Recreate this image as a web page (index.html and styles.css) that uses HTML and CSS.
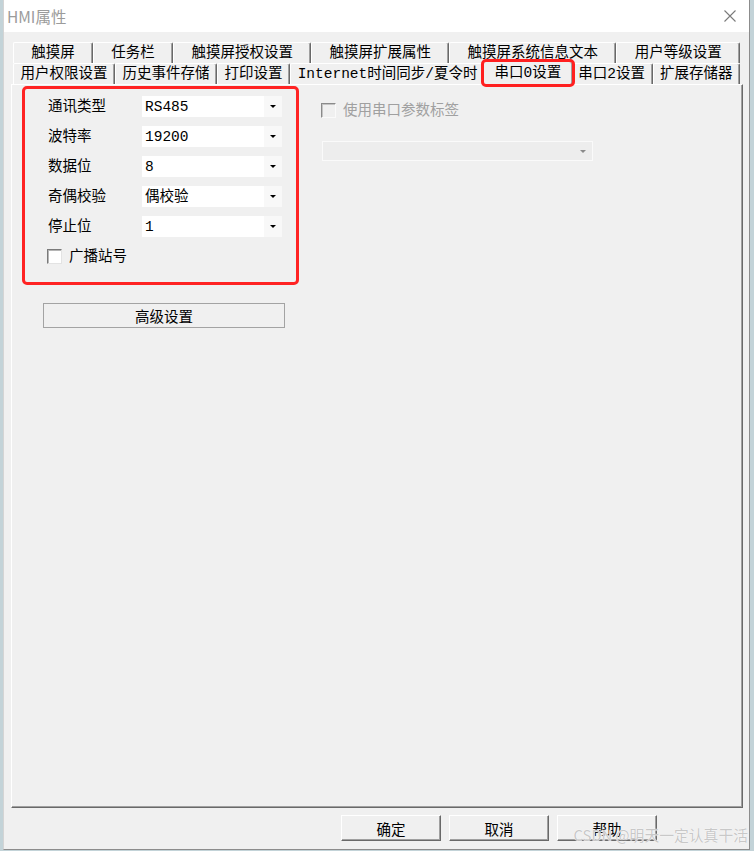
FILE: index.html
```html
<!doctype html>
<html lang="zh-CN">
  <head>
    <meta charset="UTF-8" />
    <meta name="viewport" content="width=device-width, initial-scale=1.0" />
    <title>HMI属性</title>
    <link rel="stylesheet" href="styles.css">
  </head>
  <body>
    <div class="window">
      <header class="titlebar">
        <span class="title">HMI属性</span>
        <svg class="close-icon" width="14" height="14" viewBox="0 0 14 14" aria-label="关闭">
          <path d="M1.5 1.5 L12.5 12.5 M12.5 1.5 L1.5 12.5" stroke="#7a7a7a" stroke-width="1.1" fill="none" />
        </svg>
      </header>

      <div class="dialog-body">
        <nav class="tabs">
          <div class="tab-row">
            <span class="tab">触摸屏</span>
            <span class="tab">任务栏</span>
            <span class="tab">触摸屏授权设置</span>
            <span class="tab">触摸屏扩展属性</span>
            <span class="tab">触摸屏系统信息文本</span>
            <span class="tab">用户等级设置</span>
          </div>
          <div class="tab-row">
            <span class="tab">用户权限设置</span>
            <span class="tab">历史事件存储</span>
            <span class="tab">打印设置</span>
            <span class="tab">Internet时间同步/夏令时</span>
            <span class="tab tab-active">串口0设置</span>
            <span class="tab">串口2设置</span>
            <span class="tab">扩展存储器</span>
          </div>
        </nav>

        <section class="panel">
          <div class="col-left">
            <div class="mark-box">
              <div class="field">
                <span class="field-label">通讯类型</span>
                <div class="combo"><span class="combo-value">RS485</span><span class="combo-btn"><i class="arrow"></i></span></div>
              </div>
              <div class="field">
                <span class="field-label">波特率</span>
                <div class="combo"><span class="combo-value">19200</span><span class="combo-btn"><i class="arrow"></i></span></div>
              </div>
              <div class="field">
                <span class="field-label">数据位</span>
                <div class="combo"><span class="combo-value">8</span><span class="combo-btn"><i class="arrow"></i></span></div>
              </div>
              <div class="field">
                <span class="field-label">奇偶校验</span>
                <div class="combo"><span class="combo-value">偶校验</span><span class="combo-btn"><i class="arrow"></i></span></div>
              </div>
              <div class="field">
                <span class="field-label">停止位</span>
                <div class="combo"><span class="combo-value">1</span><span class="combo-btn"><i class="arrow"></i></span></div>
              </div>
              <label class="check-row check-left">
                <span class="checkbox"></span>广播站号
              </label>
            </div>
            <button class="btn-wide" type="button">高级设置</button>
          </div>

          <div class="col-right">
            <label class="check-row check-disabled">
              <span class="checkbox"></span>使用串口参数标签
            </label>
            <div class="combo combo-disabled"><span class="combo-value"></span><span class="combo-btn"><i class="arrow"></i></span></div>
          </div>
        </section>

        <footer class="actions">
          <button class="btn" type="button">确定</button>
          <button class="btn" type="button">取消</button>
          <button class="btn" type="button">帮助</button>
        </footer>
      </div>

      <span class="watermark">CSDN @明天一定认真干活</span>
    </div>
  </body>
</html>
```

FILE: styles.css
```css
* {
  margin: 0;
  padding: 0;
  box-sizing: border-box;
}

html,
body {
  height: 100%;
  overflow: hidden;
}

body {
  background: #c3d3d8;
  font-family: "Liberation Mono", "Noto Sans CJK SC", monospace;
  font-size: 14.5px;
  color: #000;
}

.window {
  position: relative;
  margin-left: 3px;
  width: 747px;
  height: 850px;
  background: #f0f0f0;
  border-left: 1px solid #d4d4d4;
  border-right: 1px solid #8c8c8c;
  border-bottom: 1px solid #8c8c8c;
}

.titlebar {
  height: 32px;
  background: #fff;
  display: flex;
  align-items: center;
  justify-content: space-between;
  padding: 0 12px 0 3px;
}

.title {
  font-family: "Noto Sans CJK SC", sans-serif;
  font-size: 15.5px;
  color: #9b9b9b;
  line-height: 20px;
}

.close-icon {
  display: block;
}

.dialog-body {
  padding: 10px 0 0 7px;
}

/* tab strip */
.tabs {
  margin-left: 2px;
  width: 727px;
}

.tab-row {
  display: flex;
  height: 21px;
}

.tab {
  flex: 1 1 auto;
  height: 21px;
  line-height: 20px;
  padding: 0 4px;
  text-align: center;
  white-space: nowrap;
  background: #f0f0f0;
  border-top: 1px solid #fff;
  border-left: 1px solid #fff;
  border-right: 1px solid #696969;
  border-radius: 2px 2px 0 0;
  box-shadow: inset -1px 0 #a0a0a0;
}

.tab-active {
  position: relative;
  z-index: 1;
  height: 24px;
  margin: -2px -2px 0;
  padding: 0 8px;
  line-height: 22px;
  outline: 3px solid #ff2020;
  outline-offset: -1px;
  border-radius: 3px;
}

/* page panel */
.panel {
  width: 732px;
  height: 724px;
  display: flex;
  align-items: flex-start;
  border-top: 1px solid #fff;
  border-left: 1px solid #fff;
  border-right: 1px solid #696969;
  border-bottom: 1px solid #696969;
  box-shadow: inset -1px -1px #a0a0a0;
}

.col-left {
  margin-left: 10px;
  margin-top: 1px;
}

.mark-box {
  width: 277px;
  height: 199px;
  border: 3px solid #ff2323;
  border-radius: 5px;
  padding: 7px 0 0 23px;
  display: flex;
  flex-direction: column;
  gap: 9px;
}

.field {
  display: flex;
  align-items: center;
  height: 21px;
}

.field-label {
  width: 94px;
  line-height: 20px;
}

.combo {
  width: 140px;
  height: 21px;
  background: #fff;
  display: flex;
  align-items: center;
}

.combo-value {
  flex: 1;
  padding-left: 3px;
  line-height: 20px;
}

.combo-btn {
  width: 18px;
  height: 100%;
  background: #f8f8f8;
  display: flex;
  align-items: center;
  justify-content: center;
}

.arrow {
  width: 0;
  height: 0;
  border-left: 3px solid transparent;
  border-right: 3px solid transparent;
  border-top: 3px solid #000;
}

.check-row {
  display: flex;
  align-items: center;
  gap: 7px;
  height: 21px;
  line-height: 20px;
}

.checkbox {
  width: 15px;
  height: 15px;
  background: #fff;
  border: 1px solid;
  border-color: #7a7a7a #e3e3e3 #e3e3e3 #7a7a7a;
  box-shadow: inset 1px 1px #b5b5b5;
}

.check-left {
  margin-left: -1px;
}

.btn-wide {
  display: block;
  width: 242px;
  height: 25px;
  margin: 18px 0 0 21px;
  background: #f0f0f0;
  border: 1px solid #a3a3a3;
  font: inherit;
  color: #000;
}

.col-right {
  margin-left: 22px;
  padding-top: 15px;
}

.check-disabled {
  color: #a0a0a0;
}

.check-disabled .checkbox {
  background: #f0f0f0;
  border-color: #8a8a8a #fafafa #fafafa #8a8a8a;
  box-shadow: inset 1px 1px #c4c4c4;
}

.combo-disabled {
  width: 271px;
  height: 20px;
  margin: 20px 0 0 1px;
  background: #ededed;
  border: 1px solid #fafafa;
}

.combo-disabled .combo-btn {
  background: transparent;
}

.combo-disabled .arrow {
  border-top-color: #8a8a8a;
}

/* dialog buttons */
.actions {
  display: flex;
  gap: 8px;
  margin-top: 7px;
  padding-left: 330px;
}

.btn {
  width: 100px;
  height: 26px;
  background: #f0f0f0;
  border: 1px solid;
  border-color: #fff #696969 #696969 #fff;
  box-shadow: inset -1px -1px #a0a0a0;
  font: inherit;
  color: #000;
}

.watermark {
  position: absolute;
  right: 1px;
  bottom: 4px;
  font-family: "Noto Sans CJK SC", sans-serif;
  font-size: 14.8px;
  line-height: 20px;
  color: #c8c8c8;
  text-shadow: 0 0 1px #fff, 0 0 1px #fff;
}
```
